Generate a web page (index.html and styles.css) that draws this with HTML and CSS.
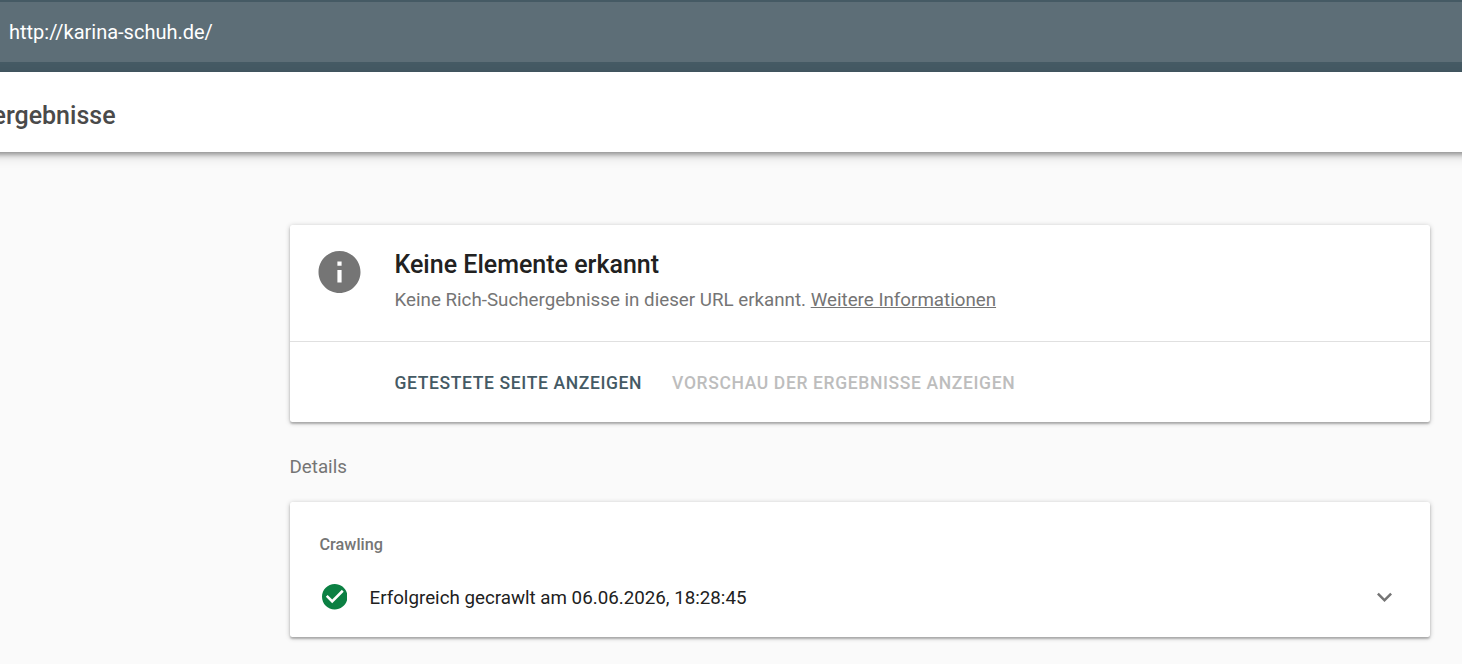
FILE: index.html
```html
<!DOCTYPE html>
<html lang="de">
<head>
    <meta charset="UTF-8">
    <meta name="viewport" content="width=device-width, initial-scale=1.0">
    <title>Test für Rich-Suchergebnisse</title>
    <link rel="stylesheet" href="styles.css">
</head>
<body>

    <div class="topbar">
        <div class="url-field"><span class="url">http://karina-schuh.de/</span></div>
    </div>

    <header class="header">
        <h1 class="header-title">ergebnisse</h1>
    </header>

    <main class="content">
        <section class="card">
            <div class="summary">
                <svg class="info-icon" viewBox="2 2 20 20">
                    <path fill="#757575" d="M12 2C6.48 2 2 6.48 2 12s4.48 10 10 10 10-4.48 10-10S17.52 2 12 2zm1 15h-2v-6h2v6zm0-8h-2V7h2v2z"/>
                </svg>
                <div class="summary-text">
                    <h2 class="summary-title">Keine Elemente erkannt</h2>
                    <p class="summary-sub">Keine Rich-Suchergebnisse in dieser URL erkannt. <a class="link" href="#">Weitere Informationen</a></p>
                </div>
            </div>
            <div class="actions">
                <button class="action">Getestete Seite anzeigen</button>
                <button class="action action-disabled" disabled>Vorschau der Ergebnisse anzeigen</button>
            </div>
        </section>

        <h3 class="section-label">Details</h3>

        <section class="card details">
            <div class="group-label">Crawling</div>
            <div class="row">
                <svg class="check-icon" viewBox="2 2 20 20">
                    <path fill="#0b8043" d="M12 2C6.48 2 2 6.48 2 12s4.48 10 10 10 10-4.48 10-10S17.52 2 12 2zm-2 15l-5-5 1.41-1.41L10 14.17l7.59-7.59L19 8l-9 9z"/>
                </svg>
                <span class="row-text">Erfolgreich gecrawlt am 06.06.2026, 18:28:45</span>
                <svg class="chevron" viewBox="0 0 24 24">
                    <path fill="#757575" d="M16.59 8.59L12 13.17 7.41 8.59 6 10l6 6 6-6z"/>
                </svg>
            </div>
        </section>
    </main>

</body>
</html>
```

FILE: styles.css
```css
body {
    font-family: Roboto, "Liberation Sans", sans-serif;
    background-color: #fafafa;
    margin: 0;
    height: 664px;
    overflow: hidden;
}

h1, h2, h3, p {
    margin: 0;
}

.topbar {
    height: 72px;
    box-sizing: border-box;
    padding: 2px 0 10px;
    background-color: #455a64;
}

.url-field {
    height: 60px;
    display: flex;
    align-items: center;
    padding-left: 9px;
    background-color: #5d6e77;
}

.url {
    color: #fff;
    font-size: 20px;
}

.header {
    height: 80px;
    display: flex;
    align-items: center;
    margin: 0 -20px;
    padding-left: 20px;
    background-color: #fff;
    box-shadow: 0 2.5px 5px rgba(0, 0, 0, 0.35), 0 4px 12px rgba(0, 0, 0, 0.15);
}

.header-title {
    margin: 7px 0 0 -7.5px;
    font-size: 25px;
    font-weight: 500;
    color: #4a4a4a;
}

.content {
    width: 1140px;
    margin: 73px 0 0 290px;
}

.card {
    background-color: #fff;
    border-radius: 2.5px;
    box-shadow: 0 1px 5px rgba(0, 0, 0, 0.25), 0 2px 2px rgba(0, 0, 0, 0.2);
}

.summary {
    display: flex;
    height: 116px;
    border-bottom: 1px solid #e0e0e0;
}

.info-icon {
    width: 43px;
    height: 42px;
    margin: 26px 33.5px 0 28px;
}

.summary-text {
    padding-top: 23px;
}

.summary-title {
    font-size: 25px;
    line-height: 34px;
    font-weight: 500;
    color: #212121;
}

.summary-sub {
    margin-top: 6px;
    font-size: 18.75px;
    line-height: 25px;
    color: #757575;
}

.link {
    color: inherit;
}

.actions {
    height: 80px;
    box-sizing: border-box;
    display: flex;
    align-items: center;
    gap: 30px;
    padding: 2px 0 0 104.5px;
}

.action {
    padding: 0;
    border: none;
    background: none;
    font-family: inherit;
    font-size: 17.5px;
    font-weight: 500;
    letter-spacing: 0.63px;
    text-transform: uppercase;
    color: #455a64;
}

.action-disabled {
    color: #bdbdbd;
}

.section-label {
    height: 80px;
    line-height: 91px;
    margin-left: -0.5px;
    font-size: 18.75px;
    font-weight: 400;
    color: #757575;
}

.details {
    height: 135px;
    box-sizing: border-box;
    padding: 33px 30px 0;
}

.group-label {
    margin-left: -0.5px;
    font-size: 16.25px;
    line-height: 20px;
    font-weight: 500;
    color: #757575;
}

.row {
    display: flex;
    align-items: center;
    height: 40px;
    margin-top: 22px;
}

.check-icon {
    width: 25.5px;
    height: 25.5px;
    margin: 0 22.5px 0 1.5px;
}

.row-text {
    flex: 1;
    padding-top: 2px;
    font-size: 18.75px;
    color: #212121;
}

.chevron {
    width: 31px;
    height: 30px;
}
```
